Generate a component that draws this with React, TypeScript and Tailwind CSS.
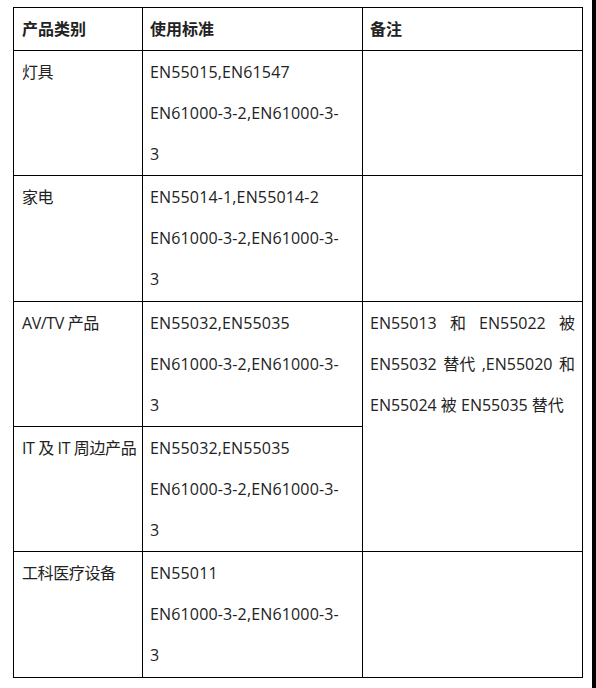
import type { ReactNode } from "react";

const font = {
  fontFamily: '"Open Sans", "Noto Sans CJK SC", sans-serif',
};

function Cell({
  children,
  className = "",
}: {
  children?: ReactNode;
  className?: string;
}) {
  return (
    <div
      className={`border-r border-b border-black pl-[7px] pr-[7px] pt-[1px] text-[16px] leading-[41px] text-[#222] ${className}`}
    >
      {children}
    </div>
  );
}

function Lines({ lines }: { lines: string[] }) {
  return (
    <>
      {lines.map((l, i) => (
        <div key={i} className="whitespace-nowrap tracking-[0.15px]">
          {l}
        </div>
      ))}
    </>
  );
}

function Spread({ words }: { words: string[] }) {
  return (
    <div className="flex justify-between whitespace-nowrap">
      {words.map((w) => (
        <span key={w}>{w}</span>
      ))}
    </div>
  );
}

const rows = [
  { cat: "灯具", std: ["EN55015,EN61547", "EN61000-3-2,EN61000-3-", "3"] },
  { cat: "家电", std: ["EN55014-1,EN55014-2", "EN61000-3-2,EN61000-3-", "3"] },
  { cat: "AV/TV 产品", std: ["EN55032,EN55035", "EN61000-3-2,EN61000-3-", "3"] },
  { cat: "IT 及 IT 周边产品", std: ["EN55032,EN55035", "EN61000-3-2,EN61000-3-", "3"] },
  { cat: "工科医疗设备", std: ["EN55011", "EN61000-3-2,EN61000-3-", "3"] },
];

export default function App() {
  return (
    <div className="flex h-[688px] w-[596px] bg-white" style={font}>
      <div className="ml-[13px] mt-[7px] self-start">
        <div className="grid grid-cols-[129px_220px_220px] grid-rows-[43px_125px_126px_125px_125px_126px] border-l border-t border-black">
          {/* header */}
          <Cell className="pl-[8px] font-bold">产品类别</Cell>
          <Cell className="font-bold">使用标准</Cell>
          <Cell className="font-bold">备注</Cell>

          {rows.map((r, i) => (
            <div key={r.cat} className="contents">
              <Cell className="pl-[8px]">
                <div className="whitespace-nowrap tracking-[-0.4px]">{r.cat}</div>
              </Cell>
              <Cell>
                <Lines lines={r.std} />
              </Cell>
              {i === 2 && (
                <Cell className="row-span-2">
                  <Spread words={["EN55013", "和", "EN55022", "被"]} />
                  <Spread words={["EN55032", "替代", ",EN55020", "和"]} />
                  <div className="whitespace-nowrap">EN55024 被 EN55035 替代</div>
                </Cell>
              )}
              {i !== 2 && i !== 3 && <Cell />}
            </div>
          ))}
        </div>
      </div>
      <div className="ml-auto w-[4px] bg-black" />
    </div>
  );
}
